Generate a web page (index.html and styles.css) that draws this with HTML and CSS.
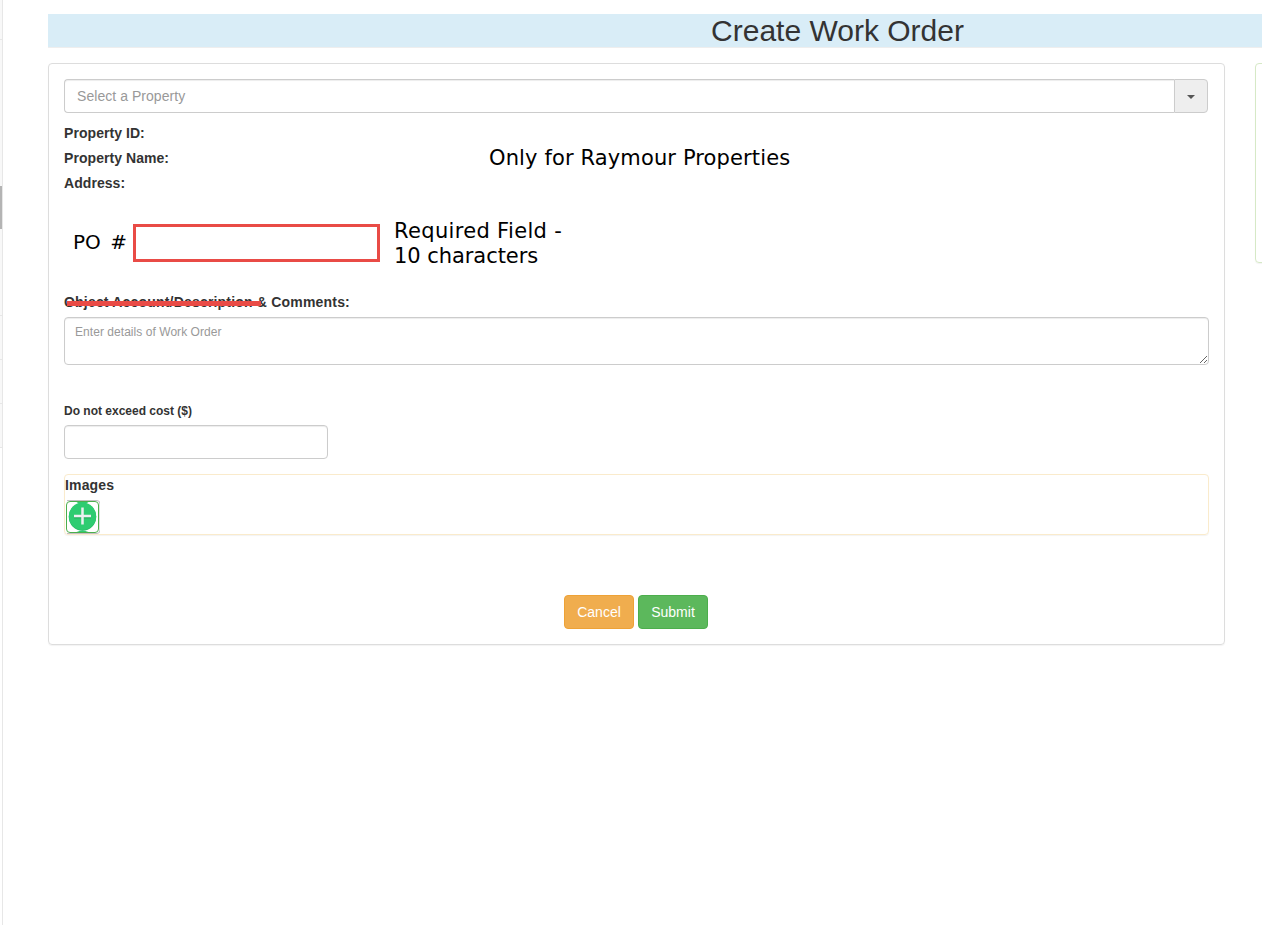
FILE: index.html
```html
<!DOCTYPE html>
<html lang="en">
<head>
<meta charset="utf-8">
<title>Create Work Order</title>
<link rel="stylesheet" href="styles.css">
</head>
<body>
<div class="app">
  <aside class="sidebar">
    <div class="nav-block nav-first"></div>
    <div class="nav-block nav-search"><div class="scroll-thumb"></div></div>
    <div class="nav-block"></div>
    <div class="nav-block"></div>
    <div class="nav-block"></div>
  </aside>
  <main class="main">
    <h1 class="page-title">Create Work Order</h1>
    <div class="columns">
      <form class="panel">
        <div class="combo">
          <input class="combo-input" type="text" placeholder="Select a Property">
          <span class="combo-toggle"><i class="caret"></i></span>
        </div>
        <div class="property">
          <div class="property-labels">
            <div>Property ID:</div>
            <div>Property Name:</div>
            <div>Address:</div>
          </div>
          <div class="note note-only">Only for Raymour Properties</div>
        </div>
        <div class="po-row">
          <label class="note note-po">PO #</label>
          <div class="po-box"></div>
          <div class="note note-required"><span class="line-a">Required Field -</span><br><span class="line-b">10 characters</span></div>
        </div>
        <label class="comments-label"><span class="struck">Object Account/Description</span> &amp; Comments:</label>
        <textarea class="comments" placeholder="Enter details of Work Order"></textarea>
        <label class="cost-label">Do not exceed cost ($)</label>
        <input class="cost" type="text">
        <section class="images">
          <div class="images-label">Images</div>
          <button class="add" type="button" aria-label="Add image">
            <svg width="34" height="34" viewBox="0 0 34 34">
              <path d="M1 0.5H31Q34 0.5 34 4V30Q34 33.5 31 33.5H1" fill="#fff" stroke="#c4bfc4"/>
              <rect x="0.5" y="1.500" width="32" height="31" rx="3.5" fill="#fff" stroke="#4cae4c"/>
              <path d="M10.500 2H22.500L19.500 4H13.500ZM10.500 32Q16.500 29 22.500 32Z" fill="#2ecc71"/>
              <circle cx="16.500" cy="17" r="13.700" fill="#27b865"/>
              <circle cx="16.500" cy="16.200" r="13.700" fill="#2ecc71"/>
              <path d="M8 17H25V18.500H8Z" fill="#27ae60"/>
              <path d="M16.500 7.500V24.500M8 16H25" stroke="#ecf0f1" stroke-width="2.500"/>
            </svg>
          </button>
        </section>
        <div class="actions">
          <button class="btn cancel" type="button">Cancel</button>
          <button class="btn submit" type="button">Submit</button>
        </div>
      </form>
      <aside class="side-panel"></aside>
    </div>
  </main>
</div>
</body>
</html>
```
FILE: styles.css
```css
* { box-sizing: border-box; }
body {
  margin: 0;
  overflow: hidden;
  background: #fff;
  color: #333;
  font-family: "Liberation Sans", Arial, sans-serif;
  font-size: 14px;
  line-height: 20px;
}
.app { display: flex; width: 1262px; height: 925px; overflow: hidden; }
.sidebar { flex: 0 0 3px; border-right: 1px solid #e7e7e7; }
.nav-block { height: 44px; background: #f8f8f8; border-bottom: 1px solid #e7e7e7; }
.nav-first { height: 40px; }
.nav-search { height: 276px; padding-top: 146px; }
.scroll-thumb { height: 43px; background: #b4b4b4; }
.main { flex: 0 0 1259px; padding: 14px 0 0 45px; overflow: hidden; }
.page-title {
  width: 1579px;
  height: 34px;
  margin: 0 0 15px;
  background: #d9edf7;
  border-bottom: 1px solid #eee;
  font-size: 30px;
  font-weight: 500;
  line-height: 33px;
  text-align: center;
}
.columns { display: flex; gap: 30px; align-items: flex-start; }
.panel {
  flex: 0 0 1177px;
  height: 582px;
  padding: 15px;
  border: 1px solid #ddd;
  border-radius: 4px;
  box-shadow: 0 1px 1px rgba(0, 0, 0, 0.05);
}
.side-panel {
  flex: 0 0 400px;
  height: 200px;
  border: 1px solid #d6e9c6;
  border-radius: 4px;
  box-shadow: 0 1px 1px rgba(0, 0, 0, 0.05);
}
input, textarea {
  display: block;
  border: 1px solid #ccc;
  border-radius: 4px;
  box-shadow: inset 0 1px 1px rgba(0, 0, 0, 0.075);
  font-family: inherit;
  background: #fff;
}
::placeholder { color: #999; opacity: 1; letter-spacing: 0.05px; }
.combo { display: flex; width: 1144px; height: 34px; }
.combo-input {
  flex: 1;
  padding: 6px 12px;
  font-size: 14px;
  border-right: 0;
  border-radius: 4px 0 0 4px;
}
.combo-toggle {
  display: flex;
  align-items: center;
  justify-content: center;
  width: 34px;
  padding-top: 2px;
  background: #eee;
  border: 1px solid #ccc;
  border-radius: 0 4px 4px 0;
}
.caret { border: 4px solid transparent; border-top-color: #555; border-bottom: 0; }
.property { display: flex; height: 75px; margin-top: 8px; font-weight: bold; line-height: 25px; }
.property-labels { width: 425px; letter-spacing: 0.06px; }
.note {
  color: #000;
  font-family: "DejaVu Sans", Verdana, sans-serif;
  font-size: 21px;
  font-weight: normal;
  line-height: 25px;
  white-space: nowrap;
}
.note-only { padding-top: 25px; letter-spacing: 0.13px; }
.po-row { display: flex; height: 66px; margin-top: 22px; }
.note-po { width: 60px; margin-left: 9px; padding-top: 12px; font-size: 20px; word-spacing: 3px; }
.po-box { width: 247px; height: 38px; margin-top: 6px; border: 3px solid #e94b46; }
.note-required { margin-left: 14px; padding-top: 1px; }
.line-a { letter-spacing: 0.33px; }
.line-b { letter-spacing: -0.06px; }
.comments-label {
  display: block;
  height: 25px;
  margin-top: 8px;
  font-weight: bold;
  letter-spacing: 0.19px;
}
.struck { position: relative; }
.struck::after {
  content: "";
  position: absolute;
  left: 3px;
  right: -8px;
  top: 7px;
  height: 5px;
  background: #e94b46;
}
.comments { width: 1145px; height: 48px; margin: 0; padding: 5px 10px; font-size: 12px; line-height: 18px; }
.cost-label { display: block; height: 24px; margin-top: 36px; font-size: 12px; font-weight: bold; }
.cost { width: 264px; height: 34px; }
.images {
  width: 1145px;
  height: 61px;
  margin-top: 15px;
  border: 1px solid #faebcc;
  border-radius: 4px;
  box-shadow: 0 1px 1px rgba(0, 0, 0, 0.05);
}
.images-label { height: 25px; font-weight: bold; letter-spacing: 0.15px; }
.add { display: block; width: 34px; height: 34px; margin: 0 0 0 1px; padding: 0; border: 0; background: none; }
.add svg { display: block; }
.actions { display: flex; justify-content: center; gap: 4px; width: 1144px; margin-top: 60px; }
.btn {
  width: 70px;
  height: 34px;
  padding: 0;
  border: 1px solid;
  border-radius: 4px;
  color: #fff;
  font: 14px/20px "Liberation Sans", Arial, sans-serif;
}
.cancel { background: #f0ad4e; border-color: #eea236; }
.submit { background: #5cb85c; border-color: #4cae4c; }
```
